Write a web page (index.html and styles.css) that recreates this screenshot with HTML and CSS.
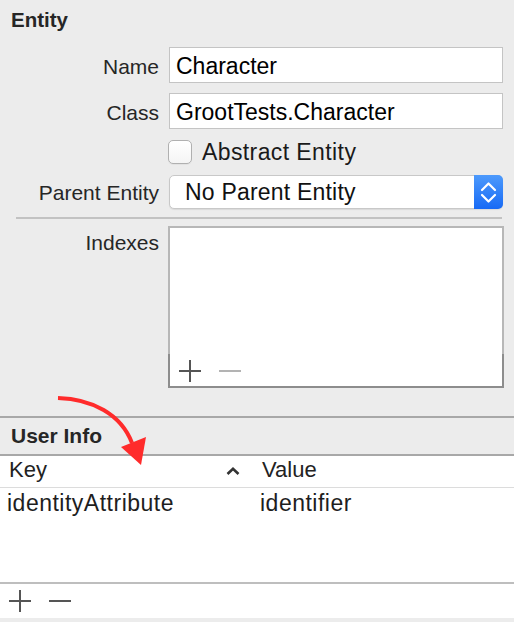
FILE: index.html
```html
<!DOCTYPE html>
<html>
<head>
<meta charset="utf-8">
<link rel="stylesheet" href="styles.css">
</head>
<body>
<div class="inspector">
  <section class="entity">
    <h2 class="section-title">Entity</h2>
    <div class="form">
      <span class="label">Name</span>
      <div class="field">Character</div>
      <span class="label">Class</span>
      <div class="field">GrootTests.Character</div>
      <label class="check"><span class="box"></span><span>Abstract Entity</span></label>
      <span class="label">Parent Entity</span>
      <div class="popup">
        <span class="popup-text">No Parent Entity</span>
        <span class="stepper">
          <svg width="29" height="34" viewBox="0 0 29 34"><polyline points="8,15 14.5,8.5 21,15" fill="none" stroke="#fff" stroke-width="2.2" stroke-linecap="round" stroke-linejoin="round"/><polyline points="8,20 14.5,26.5 21,20" fill="none" stroke="#fff" stroke-width="2.2" stroke-linecap="round" stroke-linejoin="round"/></svg>
        </span>
      </div>
    </div>
    <div class="sep"></div>
    <div class="index-row">
      <span class="label index-label">Indexes</span>
      <div class="list">
        <div class="list-body"></div>
        <div class="list-tools">
          <svg class="tool" width="22" height="22" viewBox="0 0 22 22"><path d="M0 11H22M11 0V22" stroke="#555" stroke-width="2"/></svg>
          <svg class="tool" width="22" height="22" viewBox="0 0 22 22"><path d="M0 11H22" stroke="#b3b3b3" stroke-width="2"/></svg>
        </div>
      </div>
    </div>
  </section>
  <section class="userinfo">
    <h2 class="userinfo-title">User Info</h2>
    <div class="table">
      <div class="thead">
        <div class="th key-th"><span>Key</span>
          <svg class="caret" width="14" height="8" viewBox="0 0 14 8"><polyline points="1.5,7 7,1.8 12.5,7" fill="none" stroke="#333" stroke-width="2.6"/></svg>
        </div>
        <div class="th value-th">Value</div>
      </div>
      <div class="tbody">
        <div class="tr">
          <div class="td key-td">identityAttribute</div>
          <div class="td value-td">identifier</div>
        </div>
      </div>
      <div class="table-tools">
        <svg class="tool" width="22" height="22" viewBox="0 0 22 22"><path d="M0 11H22M11 0V22" stroke="#555" stroke-width="2"/></svg>
        <svg class="tool" width="22" height="22" viewBox="0 0 22 22"><path d="M0 11H22" stroke="#555" stroke-width="2"/></svg>
      </div>
    </div>
  </section>
  <svg class="arrow" width="514" height="622" viewBox="0 0 514 622">
    <path d="M58,398 C92,399 121,414 132,443" fill="none" stroke="#ff2b2b" stroke-width="4"/>
    <polygon points="121,447 146,437 141,465" fill="#ff2b2b"/>
  </svg>
</div>
</body>
</html>
```
FILE: styles.css
```css
* { box-sizing: border-box; }
body {
  margin: 0;
  background: #ececec;
  font-family: "Liberation Sans", Arial, sans-serif;
  color: #262626;
}
.inspector {
  position: relative;
  width: 514px;
  height: 622px;
  overflow: hidden;
}
.section-title {
  margin: 0;
  padding: 8px 0 0 11px;
  font-size: 20.5px;
  line-height: 24px;
  font-weight: bold;
  color: #262626;
}
.form {
  display: grid;
  grid-template-columns: 159px 334px;
  column-gap: 10px;
  row-gap: 10px;
  align-items: baseline;
  margin-top: 15px;
}
.label {
  text-align: right;
  font-size: 21px;
  line-height: 24px;
  color: #262626;
}
.field {
  height: 36px;
  border: 1px solid #c4c4c4;
  background: #fff;
  padding: 2px 0 0 6px;
  font-size: 23px;
  line-height: 32px;
  color: #000;
  white-space: nowrap;
}
.check {
  grid-column: 2;
  display: flex;
  align-items: center;
  height: 26px;
  margin-left: -1px;
  font-size: 23px;
  line-height: 24px;
  letter-spacing: 0.4px;
  color: #1a1a1a;
}
.box {
  width: 24px;
  height: 24px;
  border: 1px solid #b0b0b0;
  border-radius: 5px;
  background: linear-gradient(#ffffff, #f4f4f4);
  margin-right: 10px;
  box-shadow: 0 1px 0 rgba(0,0,0,0.04);
}
.popup {
  display: flex;
  height: 34px;
  border: 1px solid #c8c8c8;
  border-radius: 5px;
  background: #fff;
  box-shadow: 0 1px 1px rgba(0,0,0,0.08);
}
.popup-text {
  flex: 1;
  padding-left: 15px;
  font-size: 23px;
  line-height: 32px;
  letter-spacing: 0.2px;
  color: #111;
}
.stepper {
  width: 29px;
  margin: -1px -1px -1px 0;
  border-radius: 0 5px 5px 0;
  background: linear-gradient(#4d9afc, #176af5);
  display: flex;
}
.sep {
  height: 2px;
  background: #c2c2c2;
  margin: 8px 12px 0 16px;
}
.index-row {
  display: grid;
  grid-template-columns: 159px 336px;
  column-gap: 9px;
  margin-top: 7px;
}
.index-label {
  padding-top: 5px;
}
.list {
  display: flex;
  flex-direction: column;
}
.list-body {
  height: 128px;
  background: #fff;
  border: 2px solid #b7b7b7;
  border-bottom: 0;
}
.list-tools {
  height: 34px;
  background: #fff;
  border: 2px solid #8d8d8d;
  border-top: 0;
  display: flex;
  align-items: center;
  gap: 18px;
  padding: 2px 0 0 9px;
}
.tool { display: block; }
.userinfo {
  margin-top: 28px;
  border-top: 2px solid #a8a8a8;
}
.userinfo-title {
  margin: 0;
  height: 36px;
  padding-left: 11px;
  font-size: 21px;
  line-height: 36px;
  font-weight: bold;
  color: #262626;
  border-bottom: 2px solid #a8a8a8;
  box-sizing: content-box;
}
.table {
  background: #fff;
}
.thead {
  display: grid;
  grid-template-columns: 252px 1fr;
  height: 31px;
  border-bottom: 1px solid #dcdcdc;
  box-sizing: content-box;
  font-size: 22px;
  line-height: 27px;
  color: #222;
}
.th { padding-bottom: 4px; }
.key-th {
  display: flex;
  justify-content: space-between;
  align-items: center;
  padding-left: 9px;
  padding-right: 12px;
}
.caret { margin-top: 2px; }
.value-th { padding-left: 10px; }
.tbody {
  height: 94px;
}
.tr {
  display: grid;
  grid-template-columns: 252px 1fr;
  height: 30px;
  font-size: 23px;
  line-height: 30px;
  letter-spacing: 0.5px;
  color: #1e1e1e;
}
.key-td { padding-left: 7px; }
.value-td { padding-left: 8px; }
.table-tools {
  height: 36px;
  border-top: 2px solid #bebebe;
  display: flex;
  align-items: center;
  gap: 18px;
  padding-left: 9px;
}
.arrow {
  position: absolute;
  top: 0;
  left: 0;
  pointer-events: none;
}
```
